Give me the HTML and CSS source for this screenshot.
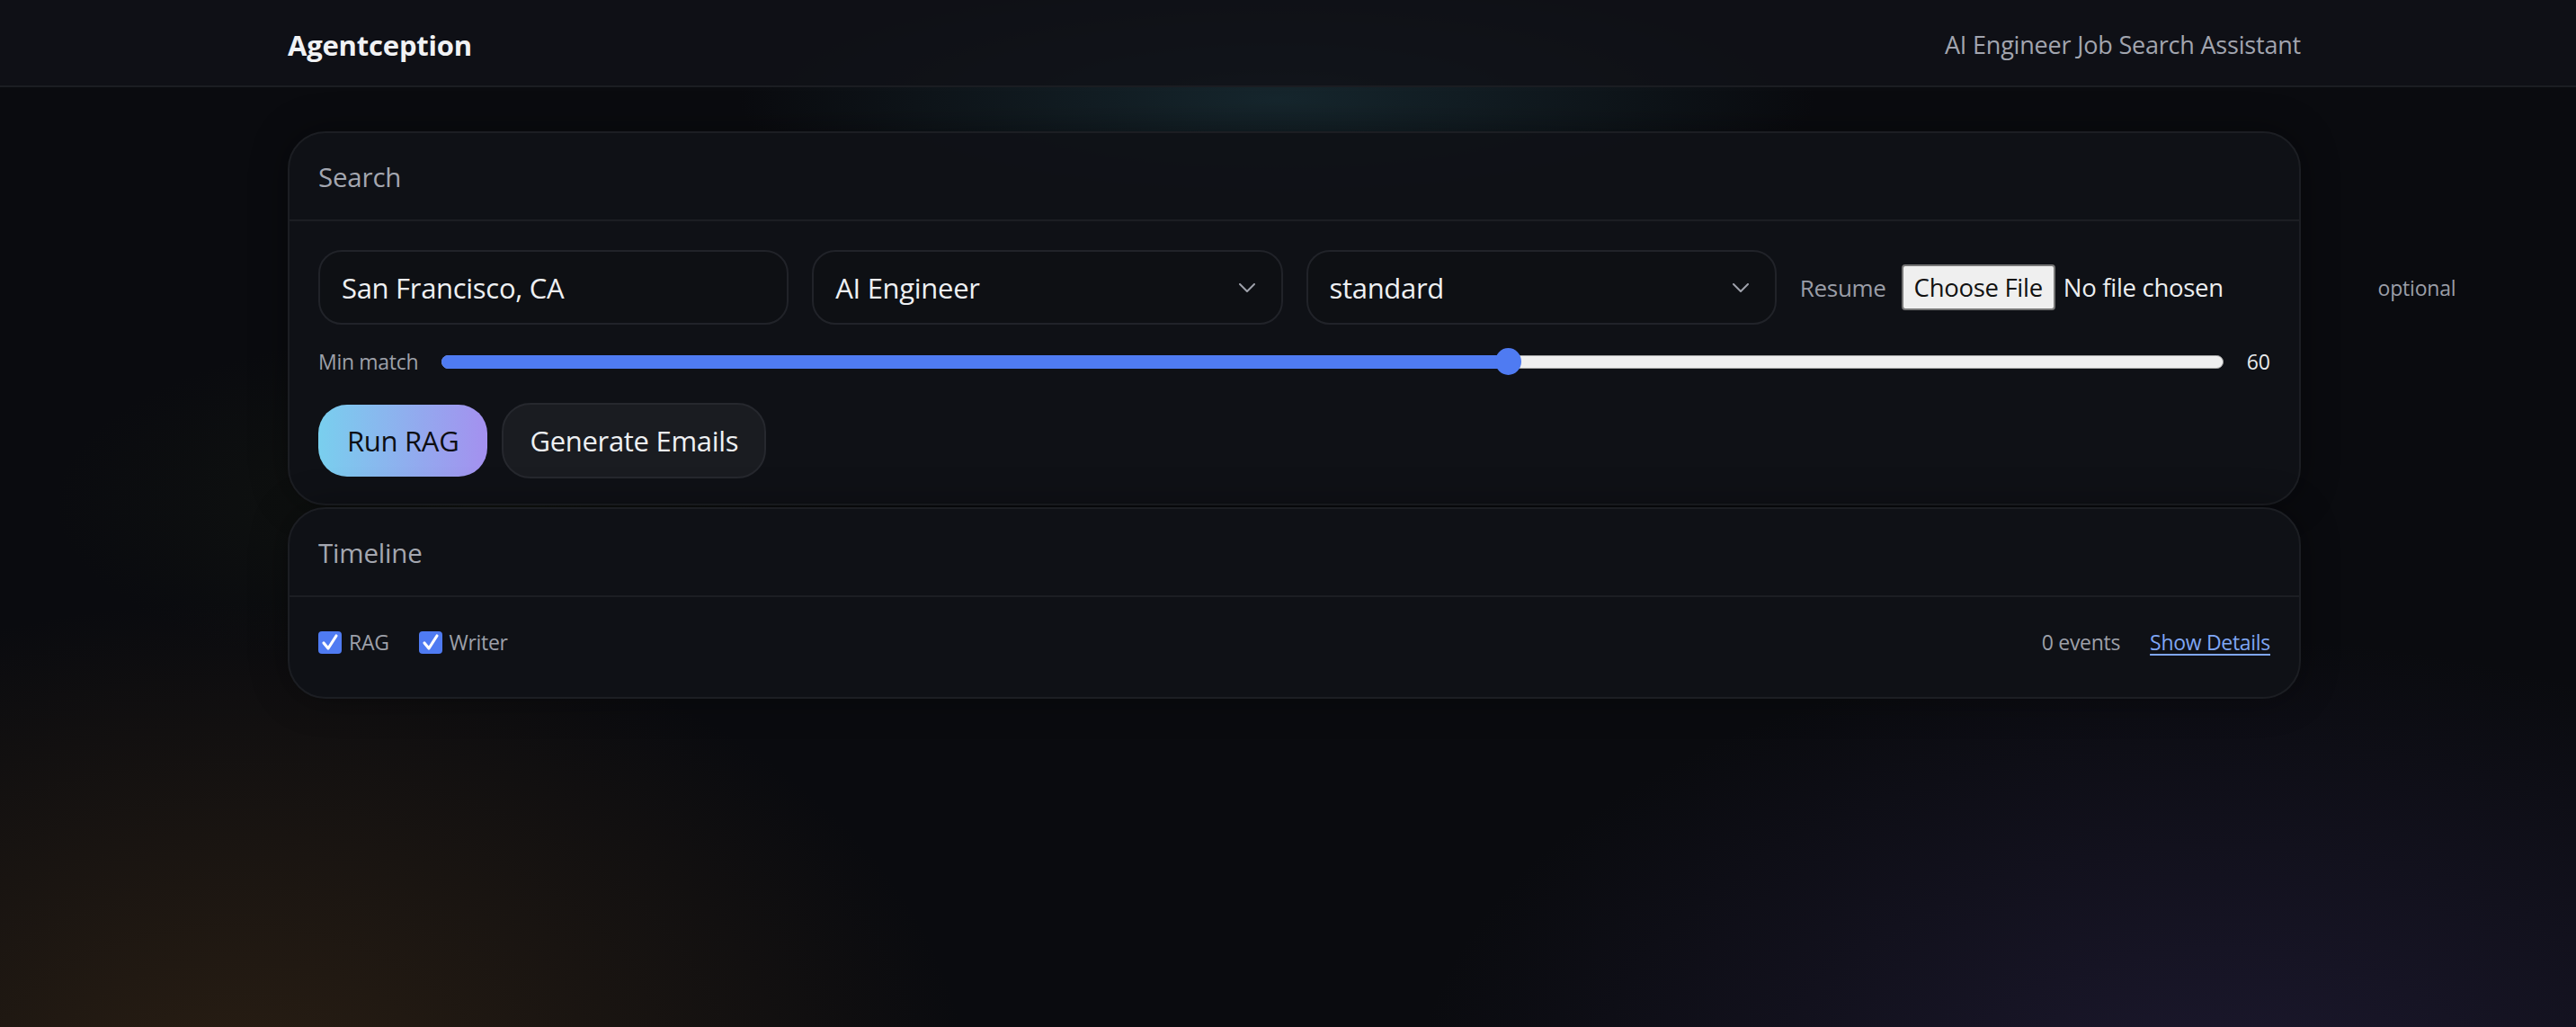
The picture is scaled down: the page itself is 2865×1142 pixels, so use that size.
FILE: index.html
```html
<!DOCTYPE html>
<html lang="en">
<head>
<meta charset="utf-8">
<title>Agentception</title>
<link rel="stylesheet" href="styles.css">
</head>
<body>
<header class="topbar">
  <div class="wrap topbar-inner">
    <div class="brand">Agentception</div>
    <div class="tagline">AI Engineer Job Search Assistant</div>
  </div>
</header>
<main class="wrap main">
  <section class="card">
    <div class="card-head">Search</div>
    <div class="card-body">
      <div class="fields">
        <div class="field"><span class="field-text">San Francisco, CA</span></div>
        <div class="field select"><span class="field-text">AI Engineer</span>
          <svg class="chev" viewBox="0 0 18 10" width="18" height="10"><path d="M1 1 L9 9 L17 1" fill="none" stroke="#9ea1ab" stroke-width="2" stroke-linecap="round" stroke-linejoin="round"/></svg>
        </div>
        <div class="field select"><span class="field-text">standard</span>
          <svg class="chev" viewBox="0 0 18 10" width="18" height="10"><path d="M1 1 L9 9 L17 1" fill="none" stroke="#9ea1ab" stroke-width="2" stroke-linecap="round" stroke-linejoin="round"/></svg>
        </div>
        <div class="file-cell">
          <span class="file-label">Resume</span>
          <span class="file">
            <span class="file-btn">Choose File</span>
            <span class="file-name">No file chosen</span>
          </span>
          <span class="optional">optional</span>
        </div>
      </div>
      <div class="slider-row">
        <span class="slider-label">Min match</span>
        <div class="track" style="--v:0.6">
          <div class="fill"></div>
          <div class="thumb"></div>
        </div>
        <span class="slider-val">60</span>
      </div>
      <div class="actions">
        <button class="btn btn-primary">Run RAG</button>
        <button class="btn btn-ghost">Generate Emails</button>
      </div>
    </div>
  </section>
  <section class="card">
    <div class="card-head">Timeline</div>
    <div class="card-body timeline-body">
      <div class="filters">
        <label class="check"><span class="box"><svg viewBox="0 0 26 25" width="26" height="25"><path d="M6 13 L11 19 L20 5" fill="none" stroke="#fff" stroke-width="3.2" stroke-linecap="round" stroke-linejoin="round"/></svg></span>RAG</label>
        <label class="check"><span class="box"><svg viewBox="0 0 26 25" width="26" height="25"><path d="M6 13 L11 19 L20 5" fill="none" stroke="#fff" stroke-width="3.2" stroke-linecap="round" stroke-linejoin="round"/></svg></span>Writer</label>
      </div>
      <div class="meta">
        <span class="count">0 events</span>
        <a class="details" href="#">Show Details</a>
      </div>
    </div>
  </section>
</main>
</body>
</html>
```
FILE: styles.css
```css
* { box-sizing: border-box; }
html, body { margin: 0; padding: 0; }
body {
  width: 2865px;
  height: 1142px;
  overflow: hidden;
  font-family: "Open Sans", "Noto Sans", "Liberation Sans", sans-serif;
  color: #e6e7ea;
  background-color: #0a0b0f;
  background-image:
    radial-gradient(ellipse 600px 140px at 1420px 110px, rgba(34, 66, 76, 0.5), rgba(34, 66, 76, 0) 100%),
    radial-gradient(ellipse 820px 560px at 260px 1230px, rgba(64, 44, 22, 0.6), rgba(64, 44, 22, 0) 100%),
    radial-gradient(ellipse 900px 520px at 2470px 1230px, rgba(46, 38, 78, 0.5), rgba(46, 38, 78, 0) 100%),
    radial-gradient(ellipse 500px 200px at 560px 560px, rgba(40, 50, 20, 0.25), rgba(40, 50, 20, 0) 100%);
}
.wrap { width: 2239px; margin-left: 320px; }

.topbar {
  height: 97px;
  background: rgba(16, 18, 23, 0.85);
  border-bottom: 2px solid #1b1d22;
}
.topbar-inner {
  height: 95px;
  display: flex;
  align-items: center;
  justify-content: space-between;
  padding-top: 4px;
}
.brand { font-size: 31px; font-weight: 700; color: #f1f2f4; letter-spacing: -0.2px; }
.tagline { font-size: 27px; color: #a2a5af; letter-spacing: -0.2px; }

.main {
  padding-top: 49px;
  display: flex;
  flex-direction: column;
  gap: 2px;
}
.card {
  background: rgba(16, 18, 23, 0.96);
  border: 2px solid #1c1e23;
  border-radius: 42px;
  box-shadow: 0 0 40px rgba(0, 0, 0, 0.35);
}
.card-head {
  height: 98px;
  display: flex;
  align-items: center;
  padding: 0 32px;
  font-size: 29.5px;
  color: #a4a7b0;
  border-bottom: 2px solid #1c1e23;
  letter-spacing: -0.2px;
}
.card-body { padding: 32px 32px 28px; }

.fields {
  display: grid;
  grid-template-columns: repeat(4, minmax(0, 1fr));
  gap: 26px;
}
.field {
  height: 83px;
  border: 2px solid #212329;
  border-radius: 26px;
  background: #0e1014;
  display: flex;
  align-items: center;
  padding: 0 29px 0 24px;
  font-size: 31px;
  color: #eef0f3;
  letter-spacing: -0.3px;
}
.field-text { flex: 1; }
.chev { flex-shrink: 0; }
.file-cell {
  display: flex;
  align-items: center;
  gap: 17px;
  white-space: nowrap;
  min-width: 0;
}
.file-label { font-size: 26px; color: #9a9da7; letter-spacing: -0.3px; flex-shrink: 0; }
.file {
  width: 513px;
  flex-shrink: 0;
  display: flex;
  align-items: center;
  gap: 9px;
}
.file-btn {
  height: 51px;
  padding: 0 12px;
  display: flex;
  align-items: center;
  background: #efefef;
  border: 2px solid #767676;
  border-radius: 4px;
  color: #111;
  font-size: 27.5px;
  letter-spacing: -0.3px;
}
.file-name { font-size: 27.5px; color: #eceef0; letter-spacing: -0.3px; }
.optional { font-size: 23px; color: #9a9da7; letter-spacing: -0.2px; flex-shrink: 0; }

.slider-row {
  margin-top: 26px;
  height: 30px;
  display: flex;
  align-items: center;
  gap: 26px;
}
.slider-label { font-size: 23px; color: #9da0a9; letter-spacing: -0.3px; }
.slider-val { font-size: 23px; color: #e8e9ec; }
.track {
  flex: 1;
  height: 15px;
  position: relative;
  background: #efefef;
  border: 1px solid #a5a5a5;
  border-radius: 8px;
}
.fill {
  width: calc(14px + var(--v) * (100% - 29px));
  background: #4f7bf2;
  border-radius: 8px 0 0 8px;
  margin: -1px 0 0 -1px;
  height: 15px;
}
.thumb {
  position: absolute;
  top: 50%;
  left: calc(var(--v) * (100% - 29px));
  width: 29px;
  height: 30px;
  margin-top: -15px;
  border-radius: 50%;
  background: #4f7bf2;
}

.actions {
  margin-top: 31px;
  display: flex;
  align-items: center;
  gap: 16px;
}
.btn {
  font-family: inherit;
  font-size: 31px;
  letter-spacing: -0.3px;
  border-radius: 32px;
  cursor: pointer;
}
.btn-primary {
  height: 80px;
  padding: 0 32px;
  border: none;
  color: #0d0e12;
  background: linear-gradient(90deg, #79cfee 0%, #a490ef 100%);
}
.btn-ghost {
  height: 84px;
  padding: 0 29px;
  color: #eef0f3;
  background: #1a1c21;
  border: 2px solid #26282e;
}

.timeline-body {
  display: flex;
  align-items: center;
  justify-content: space-between;
  padding: 34px 32px 45px;
}
.filters { display: flex; align-items: center; gap: 33px; }
.check {
  display: flex;
  align-items: center;
  gap: 8px;
  font-size: 23px;
  color: #9da0a9;
  letter-spacing: -0.3px;
}
.box {
  width: 26px;
  height: 25px;
  border-radius: 4px;
  background: #4f7bf2;
  display: flex;
}
.meta { display: flex; align-items: center; gap: 33px; font-size: 23px; letter-spacing: -0.3px; }
.count { color: #9da0a9; }
.details { color: #7fa6f4; text-decoration: underline; text-underline-offset: 4px; }
```
